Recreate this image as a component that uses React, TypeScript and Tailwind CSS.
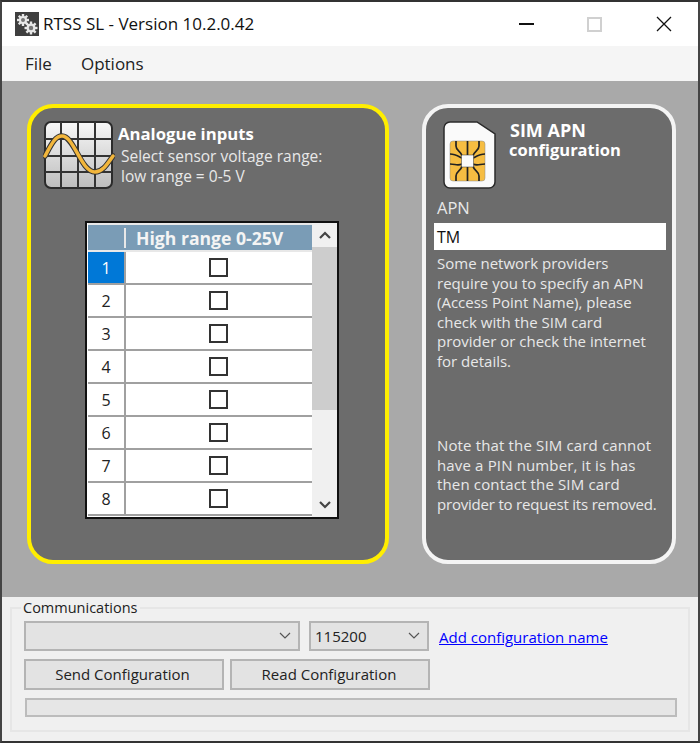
import React from "react";

const font = "font-['Open_Sans','Noto_Sans',sans-serif]";

function GearsIcon() {
  const teeth = [0, 45, 90, 135];
  const gear = (cx: number, cy: number, r: number) => (
    <g key={cx}>
      {teeth.map((a) => (
        <rect key={a} x={cx - 1.2} y={cy - r - 2} width={2.4} height={2 * r + 4} fill="#e8e8e8" transform={`rotate(${a} ${cx} ${cy})`} />
      ))}
      <circle cx={cx} cy={cy} r={r} fill="#e8e8e8" />
      <circle cx={cx} cy={cy} r={r / 2} fill="#777" />
    </g>
  );
  return (
    <svg width="24" height="24" viewBox="0 0 24 24" className="shrink-0">
      <rect width="24" height="24" fill="#3f3f3f" />
      {gear(8, 8, 4)}
      {gear(16, 16, 4.5)}
    </svg>
  );
}

function WaveIcon() {
  return (
    <svg width="72" height="70" viewBox="0 0 72 70" className="shrink-0">
      <defs>
        <linearGradient id="wv" x1="0" y1="0" x2="0" y2="1">
          <stop offset="0" stopColor="#f8f8f8" />
          <stop offset="1" stopColor="#bdbdbd" />
        </linearGradient>
      </defs>
      <rect x="2" y="1" width="67" height="66" rx="6" fill="url(#wv)" stroke="#2b2b2b" strokeWidth="2" />
      <path d="M18 1V67M35 1V67M52 1V67M2 18H69M2 35H69M2 51H69" stroke="#333" strokeWidth="2" />
      <path d="M2 35C8 24 12 15 19 15C31 15 38 51 52 51C60 51 65 42 70 35" fill="none" stroke="#333" strokeWidth="5.5" strokeLinecap="round" />
      <path d="M2 35C8 24 12 15 19 15C31 15 38 51 52 51C60 51 65 42 70 35" fill="none" stroke="#f2b63c" strokeWidth="3.5" strokeLinecap="round" />
    </svg>
  );
}

function SimIcon() {
  return (
    <svg width="54" height="68" viewBox="0 0 54 68" className="shrink-0">
      <path d="M7 1H34L52 13V61A6 6 0 0 1 46 67H7A6 6 0 0 1 1 61V7A6 6 0 0 1 7 1Z" fill="#fafafa" stroke="#2b2b2b" strokeWidth="1.5" />
      <rect x="7" y="20" width="35" height="40" rx="3" fill="#f6bd42" stroke="#8a8a8a" strokeWidth="0.5" />
      <path d="M13 20V25C13 30 18 30 19 35M24.5 20V35M36 20V25C36 30 31 30 30 35M13 60V55C13 50 18 50 19 45M24.5 60V45M36 60V55C36 50 31 50 30 45M7 33C12 33 15 35 19 37M7 43C12 43 15 45 19 43M42 33C37 33 34 35 30 37M42 43C37 43 34 45 30 43" fill="none" stroke="#222" strokeWidth="1.7" />
      <rect x="18.5" y="34" width="12" height="12" fill="#fafafa" stroke="#333" strokeWidth="0.5" />
    </svg>
  );
}

function Chevron() {
  return (
    <svg width="12" height="8" viewBox="0 0 12 8">
      <path d="M1 1L6 6L11 1" fill="none" stroke="#555" strokeWidth="1.2" />
    </svg>
  );
}

function Row({ n, selected }: { n: number; selected?: boolean }) {
  return (
    <div className="flex h-[33px] shrink-0 border-b-2 border-[#a0a0a0]">
      <div className={selected ? "flex w-[38px] items-center justify-center border-r-2 border-[#a0a0a0] bg-[#0078d7] text-white" : "flex w-[38px] items-center justify-center border-r-2 border-[#a0a0a0] bg-white text-[#222]"}>
        {n}
      </div>
      <div className="flex flex-1 items-center justify-center bg-white pr-[2px]">
        <div className="h-[19px] w-[19px] border-2 border-[#333] bg-white" />
      </div>
    </div>
  );
}

function SensorGrid() {
  return (
    <div className="ml-[54px] mt-[30px] flex h-[298px] w-[254px] overflow-hidden border-2 border-[#111] bg-white text-[16px]">
      <div className="flex h-full w-[225px] shrink-0 flex-col overflow-hidden pl-[1px]">
        <div className="flex h-[29px] shrink-0 items-center border-y-2 border-[#e8e8e8] bg-[#7a9cb6] font-bold text-[#f4f4f4]">
          <div className="h-[20px] w-[38px] border-r-2 border-[#e8e8e8]" />
          <span className="pl-[10px] text-[17.6px]">High range 0-25V</span>
        </div>
        {[1, 2, 3, 4, 5, 6, 7, 8].map((n) => (
          <Row key={n} n={n} selected={n === 1} />
        ))}
      </div>
      <div className="flex flex-1 flex-col bg-[#f0f0f0]">
        <div className="flex h-[24px] items-center justify-center">
          <svg width="12" height="8" viewBox="0 0 12 8">
            <path d="M1 7L6 2L11 7" fill="none" stroke="#444" strokeWidth="2.2" />
          </svg>
        </div>
        <div className="h-[163px] bg-[#cdcdcd]" />
        <div className="flex-1" />
        <div className="flex h-[24px] items-center justify-center">
          <svg width="12" height="8" viewBox="0 0 12 8">
            <path d="M1 1L6 6L11 1" fill="none" stroke="#444" strokeWidth="2.2" />
          </svg>
        </div>
      </div>
    </div>
  );
}

export default function App() {
  return (
    <div className={`flex h-[743px] w-[700px] flex-col overflow-hidden border-x-2 border-y-2 border-x-[#444] border-y-[#333] bg-white text-[16px] leading-[20px] ${font}`}>
      <div className="flex h-[44px] shrink-0 items-center bg-white pl-[13px] text-[#111]">
        <GearsIcon />
        <span className="ml-[4px] text-[17px]">RTSS SL - Version 10.2.0.42</span>
        <div className="ml-auto flex items-center pr-[26px]">
          <div className="h-[1.5px] w-[15px] bg-[#111]" />
          <div className="ml-[53px] h-[15px] w-[15px] border-2 border-[#d0d0d0]" />
          <svg width="16" height="16" viewBox="0 0 16 16" className="ml-[54px]">
            <path d="M1 1L15 15M15 1L1 15" stroke="#111" strokeWidth="1.3" />
          </svg>
        </div>
      </div>

      <div className="flex h-[35px] shrink-0 items-center gap-[29px] bg-[#f5f5f5] pl-[23px] text-[17px] text-[#222]">
        <span>File</span>
        <span>Options</span>
      </div>

      <div className="flex h-[516px] shrink-0 gap-[33px] bg-[#a9a9a9] pl-[25px] pt-[23px]">
        <div className="h-[460px] w-[362px] rounded-[26px] border-4 border-[#ffee00] bg-[#6c6c6c] text-white">
          <div className="flex pl-[12px] pt-[13px]">
            <WaveIcon />
            <div className="pl-[3px]">
              <div className="pt-[3px] text-[16.7px] font-bold">Analogue inputs</div>
              <div className="pl-[3px] pt-[2px] text-[15.5px] leading-[20px] text-[#e8e8e8]">
                Select sensor voltage range:
                <br />
                low range = 0-5 V
              </div>
            </div>
          </div>
          <SensorGrid />
        </div>

        <div className="h-[460px] w-[254px] rounded-[26px] border-4 border-[#f4f4f4] bg-[#6c6c6c] text-white">
          <div className="flex pl-[17px] pt-[13px]">
            <SimIcon />
            <div className="-mt-[1px] pl-[13px] font-bold">
              <div className="text-[18px] leading-[20px]">SIM APN</div>
              <div className="-ml-[1px] text-[16.5px] leading-[20px]">configuration</div>
            </div>
          </div>
          <div className="pl-[11px] pt-[9px] text-[16.5px] text-[#e8e8e8]">APN</div>
          <div className="ml-[8px] mt-[5px] flex h-[27px] w-[232px] items-center bg-white pl-[3px] text-[16px] text-[#111]">TM</div>
          <div className="pl-[11px] pt-[4px] text-[15px] leading-[19.5px] text-[#e8e8e8]">
            <p>
              Some network providers
              <br />
              require you to specify an APN
              <br />
              (Access Point Name), please
              <br />
              check with the SIM card
              <br />
              provider or check the internet
              <br />
              for details.
            </p>
            <p className="pt-[65px] tracking-[0.15px]">
              Note that the SIM card cannot
              <br />
              have a PIN number, it is has
              <br />
              then contact the SIM card
              <br />
              <span className="tracking-[-0.2px]">provider to request its removed.</span>
            </p>
          </div>
        </div>
      </div>

      <div className="relative flex-1 bg-[#f0f0f0] text-[15px] text-[#222]">
        <div className="absolute left-[8px] top-[10px] h-[125px] w-[680px] border-2 border-[#e6e6e6]" />
        <span className="absolute left-[19px] top-[1px] bg-[#f0f0f0] px-[2px] text-[14.5px]">Communications</span>
        <div className="relative flex flex-col pl-[22px] pt-[24px]">
          <div className="flex h-[30px] items-center">
            <div className="flex h-[30px] w-[276px] items-center justify-end border-2 border-[#b4b4b4] bg-[#e3e3e3] pr-[7px]">
              <Chevron />
            </div>
            <div className="ml-[9px] flex h-[30px] w-[120px] items-center justify-between border-2 border-[#b4b4b4] bg-[#e3e3e3] pl-[4px] pr-[7px]">
              <span>115200</span>
              <Chevron />
            </div>
            <a className="ml-[10px] pt-[2px] text-[#0000ff] underline">Add configuration name</a>
          </div>
          <div className="mt-[8px] flex gap-[6px]">
            <div className="flex h-[31px] w-[200px] items-center justify-center border-2 border-[#b4b4b4] bg-[#e3e3e3] pb-[2px] pr-[3px]">Send Configuration</div>
            <div className="flex h-[31px] w-[200px] items-center justify-center border-2 border-[#b4b4b4] bg-[#e3e3e3] pb-[2px] pr-[2px]">Read Configuration</div>
          </div>
          <div className="ml-[1px] mt-[8px] h-[19px] w-[652px] border-2 border-[#bcbcbc] bg-[#e6e6e6]" />
        </div>
      </div>
    </div>
  );
}
